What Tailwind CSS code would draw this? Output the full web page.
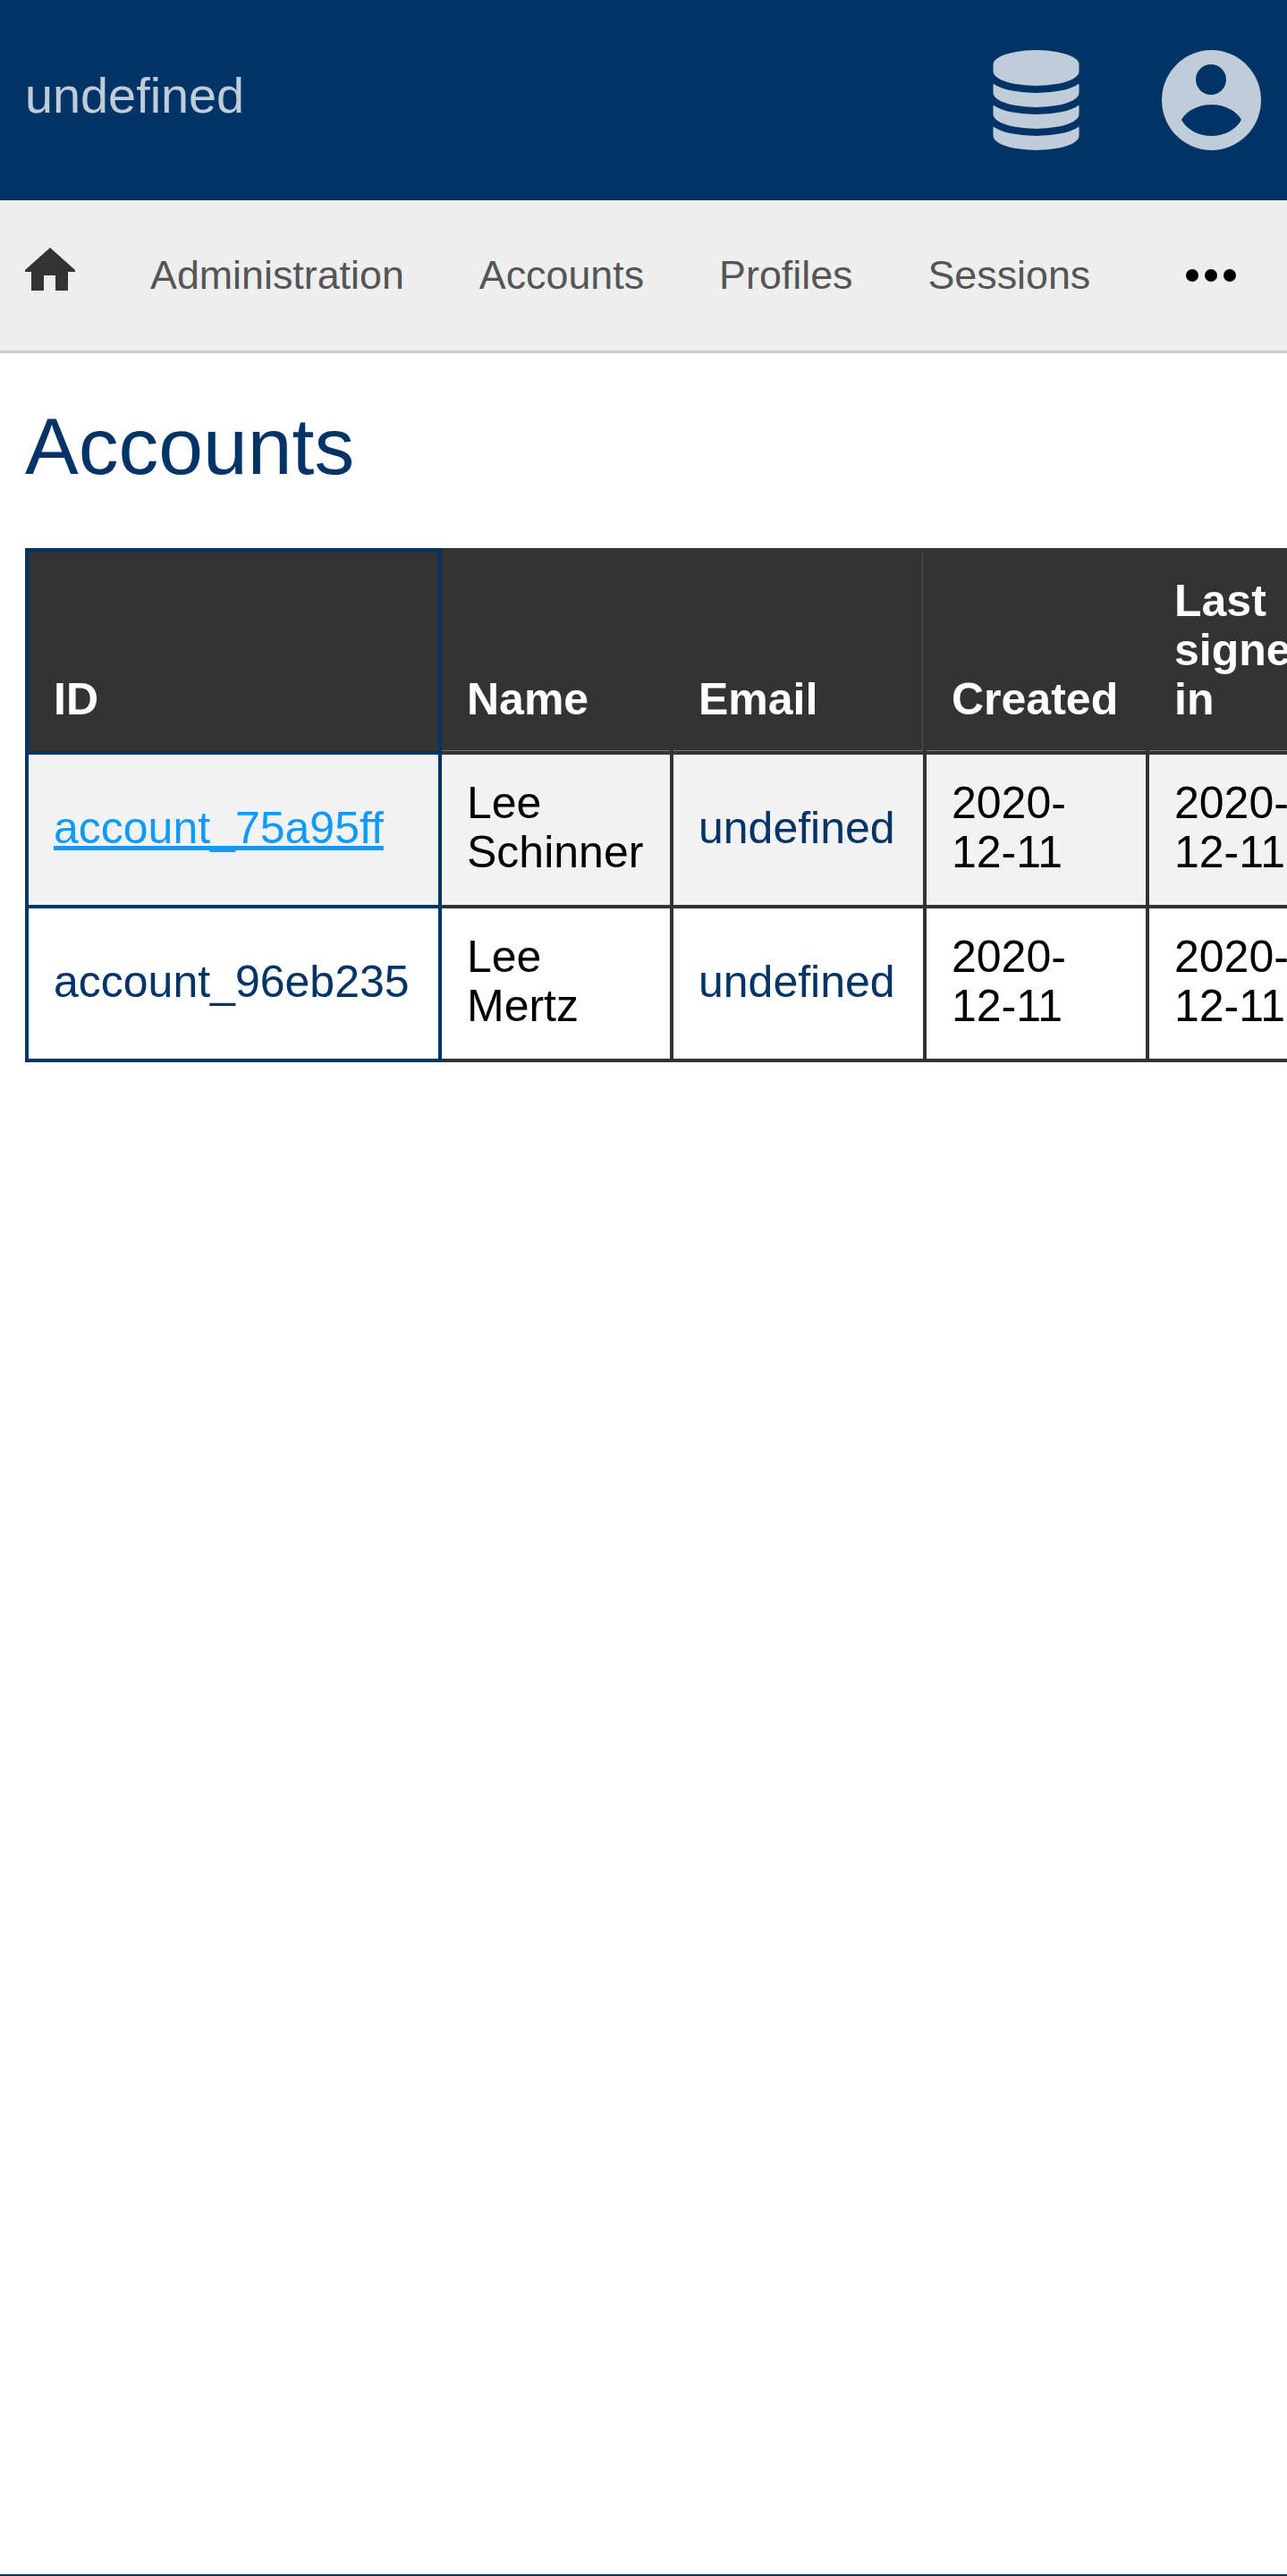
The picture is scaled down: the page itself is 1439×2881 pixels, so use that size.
<!DOCTYPE html>
<html lang="en">
  <head>
    <meta charset="UTF-8" />
    <title>Accounts</title>
    <script src="https://cdn.jsdelivr.net/npm/@tailwindcss/browser@4"></script>
  </head>
  <body class="bg-white font-['Liberation_Sans',Arial,sans-serif] overflow-x-hidden">
    <div class="h-[2881px] flex flex-col overflow-hidden">
      <!-- Top bar -->
      <header class="h-[224px] shrink-0 bg-[#003366] flex items-center justify-between pl-[28px] pr-[29px]">
        <span class="text-[55.8px] leading-[64px] text-[#bfccd9] mb-[10px]">undefined</span>
        <div class="flex items-center gap-[92px]">
          <svg class="w-[97px] h-[112px]" viewBox="0 0 1536 1792" fill="#bfccd9"><path d="M768 768q237 0 443-43t325-127v170q0 69-103 128t-280 93.5-385 34.5-385-34.5-280-93.5-103-128v-170q119 84 325 127t443 43zm0 768q237 0 443-43t325-127v170q0 69-103 128t-280 93.5-385 34.5-385-34.5-280-93.5-103-128v-170q119 84 325 127t443 43zm0-384q237 0 443-43t325-127v170q0 69-103 128t-280 93.5-385 34.5-385-34.5-280-93.5-103-128v-170q119 84 325 127t443 43zm0-1152q208 0 385 34.5t280 93.5 103 128v128q0 69-103 128t-280 93.5-385 34.5-385-34.5-280-93.5-103-128v-128q0-69 103-128t280-93.5 385-34.5z"/></svg>
          <svg class="w-[111px] h-[112px]" viewBox="0 0 111 112" fill="#bfccd9" fill-rule="evenodd"><path d="M55.5 0a55.5 56 0 1 0 0 112a55.5 56 0 1 0 0-112zM55 16a17 17 0 1 1 0 34a17 17 0 1 1 0-34zM22 78C28 67 42 61 55.5 61C69 61 83 67 89 78C83 89 70 96 55.5 96C41 96 28 89 22 78Z"/></svg>
        </div>
      </header>

      <!-- Navigation -->
      <nav class="h-[171px] shrink-0 bg-[#eeeeee] border-b-[3px] border-[#cccccc] flex items-center pl-[28px] pr-[57px] pb-[1px] text-[44.8px] text-[#555555]">
        <svg class="w-[56px] h-[48px] mr-[84px] -mt-[14px]" viewBox="0 0 56 48" fill="#333333"><path d="M28 0L56 25V27H48V48H34V31H21V48H7V27H0V25Z"/></svg>
        <a href="#" class="mr-[84px]">Administration</a>
        <a href="#" class="mr-[84px]">Accounts</a>
        <a href="#" class="mr-[84px]">Profiles</a>
        <a href="#">Sessions</a>
        <div class="ml-auto flex gap-[7px]">
          <span class="w-[14px] h-[14px] rounded-full bg-black"></span>
          <span class="w-[14px] h-[14px] rounded-full bg-black"></span>
          <span class="w-[14px] h-[14px] rounded-full bg-black"></span>
        </div>
      </nav>

      <main class="flex-1 pl-[28px]">
        <h1 class="text-[89.5px] leading-[100px] text-[#003366] mt-[54px] mb-[64px]">Accounts</h1>
        <table class="border-collapse table-fixed w-[1493px] text-[50px] leading-[55px] text-black">
          <colgroup>
            <col class="w-[462px]" />
            <col class="w-[259px]" />
            <col class="w-[283px]" />
            <col class="w-[249px]" />
            <col class="w-[240px]" />
          </colgroup>
          <thead>
            <tr class="bg-[#333333] text-white font-bold align-bottom text-left">
              <th class="pl-[28px] pr-[29px] pt-[28px] pb-[30px] border-[4px] border-[#003366]">ID</th>
              <th class="pl-[28px] pr-[29px] pt-[28px] pb-[30px] border-[4px] border-[#333333] shadow-[inset_0_-1px_0_#777777]">Name</th>
              <th class="pl-[28px] pr-[29px] pt-[28px] pb-[30px] border-[4px] border-[#333333] shadow-[inset_-1px_0_0_#4d4d4d,inset_0_-1px_0_#777777]">Email</th>
              <th class="pl-[28px] pr-[29px] pt-[28px] pb-[30px] border-[4px] border-[#333333] shadow-[inset_0_-1px_0_#777777]">Created</th>
              <th class="pl-[28px] pr-[29px] pt-[28px] pb-[30px] border-[4px] border-[#333333] shadow-[inset_0_-1px_0_#777777]">Last signed in</th>
            </tr>
          </thead>
          <tbody>
            <tr class="bg-[#f2f2f2]">
              <td class="pl-[28px] pr-[29px] pt-[27px] pb-[31px] border-[4px] border-[#003366]"><a href="#" class="text-[#1199ff] underline">account_75a95ff</a></td>
              <td class="pl-[28px] pr-[29px] pt-[27px] pb-[31px] border-[4px] border-[#333333]">Lee Schinner</td>
              <td class="pl-[28px] pr-[29px] pt-[27px] pb-[31px] border-[4px] border-[#333333] text-[#003366]">undefined</td>
              <td class="pl-[28px] pr-[29px] pt-[27px] pb-[31px] border-[4px] border-[#333333]">2020-12-11</td>
              <td class="pl-[28px] pr-[29px] pt-[27px] pb-[31px] border-[4px] border-[#333333]">2020-12-11</td>
            </tr>
            <tr>
              <td class="pl-[28px] pr-[29px] pt-[27px] pb-[31px] border-[4px] border-[#003366] text-[#003366]">account_96eb235</td>
              <td class="pl-[28px] pr-[29px] pt-[27px] pb-[31px] border-[4px] border-[#333333]">Lee Mertz</td>
              <td class="pl-[28px] pr-[29px] pt-[27px] pb-[31px] border-[4px] border-[#333333] text-[#003366]">undefined</td>
              <td class="pl-[28px] pr-[29px] pt-[27px] pb-[31px] border-[4px] border-[#333333]">2020-12-11</td>
              <td class="pl-[28px] pr-[29px] pt-[27px] pb-[31px] border-[4px] border-[#333333]">2020-12-11</td>
            </tr>
          </tbody>
        </table>
      </main>

      <footer class="h-[2px] shrink-0 bg-[#003366]"></footer>
    </div>
  </body>
</html>
